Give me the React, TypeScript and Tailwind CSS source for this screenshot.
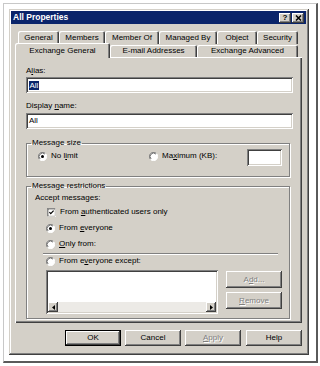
import React from 'react';

const winEdge =
  'shadow-[inset_-1px_-1px_#404040,inset_1px_1px_#d4d0c8,inset_-2px_-2px_#808080,inset_2px_2px_#ffffff]';
const btnEdge = 'shadow-[inset_-1px_-1px_#404040,inset_1px_1px_#ffffff,inset_-2px_-2px_#808080]';
const sunken =
  'shadow-[inset_1px_1px_#808080,inset_-1px_-1px_#ffffff,inset_2px_2px_#404040,inset_-2px_-2px_#d4d0c8]';
const etched = 'border border-[#808080] shadow-[1px_1px_0_#ffffff,inset_1px_1px_0_#ffffff]';
const disabled = 'text-[#808080] [text-shadow:1px_1px_0_#ffffff]';

const backTabs = [
  { label: 'General', w: 'w-[41px]' },
  { label: 'Members', w: 'w-[46px]' },
  { label: 'Member Of', w: 'w-[54px]' },
  { label: 'Managed By', w: 'w-[58px]' },
  { label: 'Object', w: 'w-[40px]' },
  { label: 'Security', w: 'w-[41px]' },
];

const Radio = ({ checked }: { checked?: boolean }) => (
  <svg width="9" height="9" viewBox="0 0 12 12" className="shrink-0">
    <circle cx="6" cy="6" r="5.5" fill="#ffffff" />
    <path d="M10 2 A5.5 5.5 0 0 0 2 10" stroke="#808080" strokeWidth="1.2" fill="none" />
    <path d="M9.2 2.8 A4.5 4.5 0 0 0 2.8 9.2" stroke="#404040" strokeWidth="1" fill="none" />
    <path d="M2 10 A5.5 5.5 0 0 0 10 2" stroke="#ffffff" strokeWidth="1.2" fill="none" />
    {checked && <circle cx="6" cy="6" r="2" fill="#000000" />}
  </svg>
);

const Check = () => (
  <svg width="9" height="9" viewBox="0 0 12 12" className="shrink-0">
    <rect x="0" y="0" width="12" height="12" fill="#d4d0c8" />
    <rect x="0" y="0" width="11" height="11" fill="#808080" />
    <rect x="1" y="1" width="11" height="11" fill="#ffffff" />
    <rect x="1" y="1" width="10" height="10" fill="#404040" />
    <rect x="2" y="2" width="9" height="9" fill="#d4d0c8" />
    <rect x="2" y="2" width="8" height="8" fill="#ffffff" />
    <path d="M3.2 5.6 L5 7.4 L8.8 3.6" stroke="#000000" strokeWidth="1.6" fill="none" />
  </svg>
);

const Option = ({ children, checked, box }: { children: React.ReactNode; checked?: boolean; box?: boolean }) => (
  <div className="flex items-center gap-[4px] h-[10px] leading-[10px]">
    {box ? <Check /> : <Radio checked={checked} />}
    <span>{children}</span>
  </div>
);

const Button = ({ children, w, off, main }: { children: React.ReactNode; w: string; off?: boolean; main?: boolean }) => (
  <div
    className={`${w} flex items-center justify-center bg-[#d4d0c8] ${
      main
        ? 'shadow-[inset_0_0_0_1px_#000000,inset_-2px_-2px_#404040,inset_2px_2px_#ffffff,inset_-3px_-3px_#808080]'
        : btnEdge
    } ${off ? disabled : 'text-black'}`}
  >
    {children}
  </div>
);

export default function App() {
  return (
    <div className="w-[320px] h-[366px] bg-white p-[3px] font-['Liberation_Sans',Arial,sans-serif] text-[8px] text-black">
      <div className="w-[315px] h-[360px] border-t border-l border-[#c8c8c8] border-r-2 border-b-2 border-r-[#5a5a5a] border-b-[#5a5a5a] pt-[5px] pl-[5px]">
        <div className={`w-[300px] bg-[#d4d0c8] ${winEdge} pt-[2px] pl-[2px] pr-[3px] pb-[9px]`}>
          {/* title bar */}
          <div className="h-[13px] bg-[#0a246a] flex items-center justify-between pl-[2px] pr-[2px]">
            <span className="text-white font-bold text-[8.5px] leading-none">All Properties</span>
            <div className="flex gap-[1px]">
              <div className={`w-[12px] h-[10px] bg-[#d4d0c8] ${btnEdge} flex items-center justify-center font-bold text-[8px] leading-none`}>
                ?
              </div>
              <div className={`w-[12px] h-[10px] bg-[#d4d0c8] ${btnEdge} flex items-center justify-center`}>
                <svg width="7" height="6" viewBox="0 0 7 6">
                  <path d="M1 0.5 L6 5.5 M6 0.5 L1 5.5" stroke="#000" strokeWidth="1.5" />
                </svg>
              </div>
            </div>
          </div>

          <div className="px-[4px]">
            {/* tabs */}
            <div className="flex ml-[3px] mt-[7px] h-[13px]">
              {backTabs.map((t) => (
                <div
                  key={t.label}
                  className={`${t.w} h-[13px] flex items-center justify-center rounded-t-[2px] shadow-[inset_1px_1px_#ffffff,inset_-1px_0_#404040,inset_-2px_0_#808080] leading-none`}
                >
                  {t.label}
                </div>
              ))}
            </div>
            <div className="flex items-end h-[13px]">
              <div className="relative z-10 w-[95px] h-[15px] -mb-[1px] bg-[#d4d0c8] flex items-center justify-center rounded-t-[2px] shadow-[inset_1px_1px_#ffffff,inset_-1px_0_#404040,inset_-2px_0_#808080] leading-none">
                Exchange General
              </div>
              <div className="w-[87px] h-[12px] flex items-center justify-center rounded-t-[2px] shadow-[inset_1px_1px_#ffffff,inset_-1px_0_#404040,inset_-2px_0_#808080] leading-none">
                E-mail Addresses
              </div>
              <div className="w-[101px] h-[12px] flex items-center justify-center rounded-t-[2px] shadow-[inset_1px_1px_#ffffff,inset_-1px_0_#404040,inset_-2px_0_#808080] leading-none">
                Exchange Advanced
              </div>
            </div>

            {/* panel */}
            <div className="h-[266px] bg-[#d4d0c8] shadow-[inset_1px_1px_#ffffff,inset_-1px_-1px_#404040,inset_-2px_-2px_#808080] pl-[11px] pr-[9px] pt-[9px]">
              <div className="h-[10px] leading-[10px]">
                A<u>l</u>ias:
              </div>
              <div className={`mt-[1px] h-[16px] bg-white ${sunken} flex items-center pl-[3px]`}>
                <span className="bg-[#0a246a] text-white leading-[9px] px-[0.5px]">All</span>
              </div>
              <div className="mt-[8px] h-[10px] leading-[10px]">
                Display <u>n</u>ame:
              </div>
              <div className={`mt-[2px] h-[16px] bg-white ${sunken} flex items-center pl-[3px]`}>All</div>

              <fieldset className={`${etched} w-[264px] mt-[9px] pb-[10px]`}>
                <legend className="ml-[4px] px-[1px] leading-[10px]">Message size</legend>
                <div className="flex pl-[11px] mt-[1px]">
                  <div className="w-[111px] mt-[2px]">
                    <Option checked>
                      No l<u>i</u>mit
                    </Option>
                  </div>
                  <div className="w-[98px] mt-[2px]">
                    <Option>
                      Ma<u>x</u>imum (KB):
                    </Option>
                  </div>
                  <div className={`w-[35px] h-[17px] bg-white ${sunken}`} />
                </div>
              </fieldset>

              <fieldset className={`${etched} w-[264px] mt-[4px] pb-[4px]`}>
                <legend className="ml-[4px] px-[1px] leading-[10px]">Message restrictions</legend>
                <div className="ml-[8px] mt-[2px] h-[10px] leading-[10px]">Accept messages:</div>
                <div className="ml-[20px] mt-[4px]">
                  <Option box>
                    From <u>a</u>uthenticated users only
                  </Option>
                </div>
                <div className="ml-[19px] mt-[6px]">
                  <Option checked>
                    From <u>e</u>veryone
                  </Option>
                </div>
                <div className="ml-[19px] mt-[6px]">
                  <Option>
                    <u>O</u>nly from:
                  </Option>
                </div>
                <div className="ml-[16px] mt-[4px] w-[235px] h-[2px] border-t border-[#808080] border-b border-b-white" />
                <div className="ml-[19px] mt-[1px]">
                  <Option>
                    From e<u>v</u>eryone except:
                  </Option>
                </div>
                <div className="flex mt-[4px] ml-[19px] gap-[8px]">
                  <div className={`w-[172px] h-[44px] bg-white ${sunken} flex flex-col p-[2px]`}>
                    <div className="flex-1" />
                    <div className="h-[10px] flex bg-[#eceae6]">
                      <div className={`w-[10px] h-[10px] bg-[#d4d0c8] ${btnEdge} flex items-center justify-center`}>
                        <svg width="3" height="5" viewBox="0 0 3 5">
                          <path d="M3 0 L0 2.5 L3 5 Z" fill="#000" />
                        </svg>
                      </div>
                      <div className="flex-1" />
                      <div className={`w-[10px] h-[10px] bg-[#d4d0c8] ${btnEdge} flex items-center justify-center`}>
                        <svg width="3" height="5" viewBox="0 0 3 5">
                          <path d="M0 0 L3 2.5 L0 5 Z" fill="#000" />
                        </svg>
                      </div>
                    </div>
                  </div>
                  <div className="flex flex-col gap-[4px] mt-[1px]">
                    <Button w="w-[56px] h-[17px]" off>
                      A<u>d</u>d...
                    </Button>
                    <Button w="w-[56px] h-[17px]" off>
                      <u>R</u>emove
                    </Button>
                  </div>
                </div>
              </fieldset>
            </div>

            {/* dialog buttons */}
            <div className="flex justify-end gap-[4px] mt-[7px] h-[16px]">
              <Button w="w-[56px]" main>
                OK
              </Button>
              <Button w="w-[56px]">Cancel</Button>
              <Button w="w-[56px]" off>
                <u>A</u>pply
              </Button>
              <Button w="w-[56px] ml-[1px]">Help</Button>
            </div>
          </div>
        </div>
      </div>
    </div>
  );
}
